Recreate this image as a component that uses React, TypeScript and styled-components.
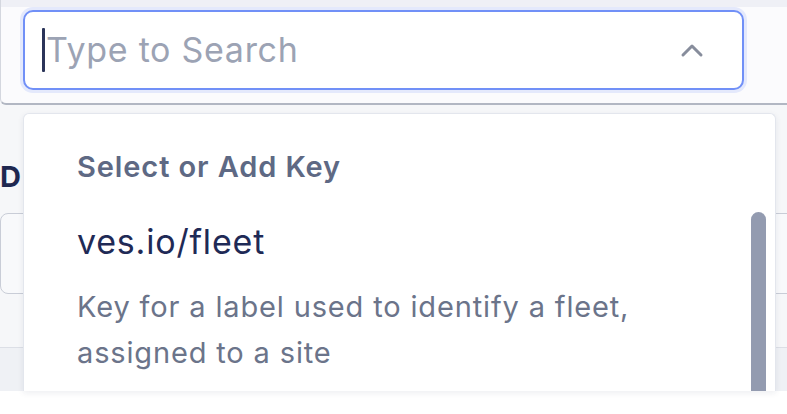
import React from "react";
import styled, { createGlobalStyle } from "styled-components";

const Global = createGlobalStyle`
  html, body { margin: 0; padding: 0; background: #ffffff; }
  body { font-family: Inter, "Noto Sans", "Liberation Sans", sans-serif; -webkit-font-smoothing: antialiased; }
  * { box-sizing: border-box; }
`;

const Page = styled.div`
  position: relative;
  width: 787px;
  height: 414px;
  overflow: hidden;
  background: #ffffff;
`;

const Screen = styled.div`
  height: 391px;
  display: flex;
  flex-direction: column;
  background: #f6f7f9;
`;

const SearchPanel = styled.div`
  height: 105px;
  flex: none;
  padding: 10px 0 0 22px;
  background: linear-gradient(#eff0f6 0, #eff0f6 7px, #fbfbfd 7px, #fbfbfd 100%);
  border-left: 1px solid #d4d7df;
  border-bottom: 2px solid #b2b7c3;
  border-bottom-left-radius: 6px;
`;

const SearchBox = styled.div`
  width: 721px;
  height: 80px;
  display: flex;
  align-items: center;
  padding: 0 38px 0 17px;
  background: #ffffff;
  border: 2px solid #7190f7;
  border-radius: 10px;
  box-shadow: 0 0 0 3px rgba(113, 144, 247, 0.16);
`;

const Caret = styled.span`
  width: 3px;
  height: 44px;
  flex: none;
  background: #2b3459;
  border-radius: 1px;
`;

const Placeholder = styled.span`
  flex: 1;
  margin-left: 1px;
  font-size: 34px;
  line-height: 44px;
  color: #9ca3b4;
  letter-spacing: 0.7px;
`;

const Chevron = styled.svg`
  width: 24px;
  height: 16px;
  flex: none;
`;

const Form = styled.div`
  flex: 1;
  display: flex;
  flex-direction: column;
  padding-top: 52px;
`;

const FieldLabel = styled.div`
  font-size: 29px;
  font-weight: 700;
  line-height: 40px;
  color: #1e2850;
`;

const FieldBox = styled.div`
  margin-top: 16px;
  height: 81px;
  margin-right: -20px;
  border: 1px solid #c9cdd7;
  border-radius: 8px;
  background: #f8f9fb;
`;

const Divider = styled.div`
  margin-top: 53px;
  flex: 1;
  border-top: 1px solid #dcdfe6;
  background: #eff1f5;
`;

const Dropdown = styled.div`
  position: absolute;
  left: 23px;
  top: 113px;
  width: 753px;
  height: 278px;
  display: flex;
  background: #ffffff;
  border: 1px solid #e3e6ed;
  border-bottom: none;
  border-radius: 6px 6px 0 0;
  box-shadow: 0 2px 6px rgba(30, 40, 80, 0.08);
  overflow: hidden;
`;

const List = styled.div`
  flex: 1;
  padding: 33px 0 0 53px;
`;

const GroupTitle = styled.div`
  font-size: 29px;
  font-weight: 600;
  line-height: 40px;
  letter-spacing: 0.9px;
  color: #5e6984;
`;

const OptionTitle = styled.div`
  margin-top: 33px;
  font-size: 34px;
  line-height: 44px;
  letter-spacing: 0.8px;
  color: #1f2a56;
`;

const OptionDesc = styled.div`
  margin-top: 20px;
  width: 640px;
  font-size: 29px;
  line-height: 46px;
  letter-spacing: 0.85px;
  color: #6b748a;
`;

const ScrollTrack = styled.div`
  width: 24px;
  flex: none;
  padding: 98px 9px 0 0;
`;

const Thumb = styled.div`
  height: 100%;
  width: 15px;
  background: #939bb0;
  border-radius: 8px 8px 0 0;
`;

export default function App() {
  return (
    <Page>
      <Global />
      <Screen>
        <SearchPanel>
          <SearchBox>
            <Caret />
            <Placeholder>Type to Search</Placeholder>
            <Chevron viewBox="0 0 24 16" fill="none">
              <polyline
                points="3,13 12,4 21,13"
                stroke="#878d9c"
                strokeWidth="3"
                strokeLinecap="round"
                strokeLinejoin="round"
              />
            </Chevron>
          </SearchBox>
        </SearchPanel>
        <Form>
          <FieldLabel>D</FieldLabel>
          <FieldBox />
          <Divider />
        </Form>
      </Screen>
      <Dropdown>
        <List>
          <GroupTitle>Select or Add Key</GroupTitle>
          <OptionTitle>ves.io/fleet</OptionTitle>
          <OptionDesc>
            Key for a label used to identify a fleet, assigned to a site
          </OptionDesc>
        </List>
        <ScrollTrack>
          <Thumb />
        </ScrollTrack>
      </Dropdown>
    </Page>
  );
}
